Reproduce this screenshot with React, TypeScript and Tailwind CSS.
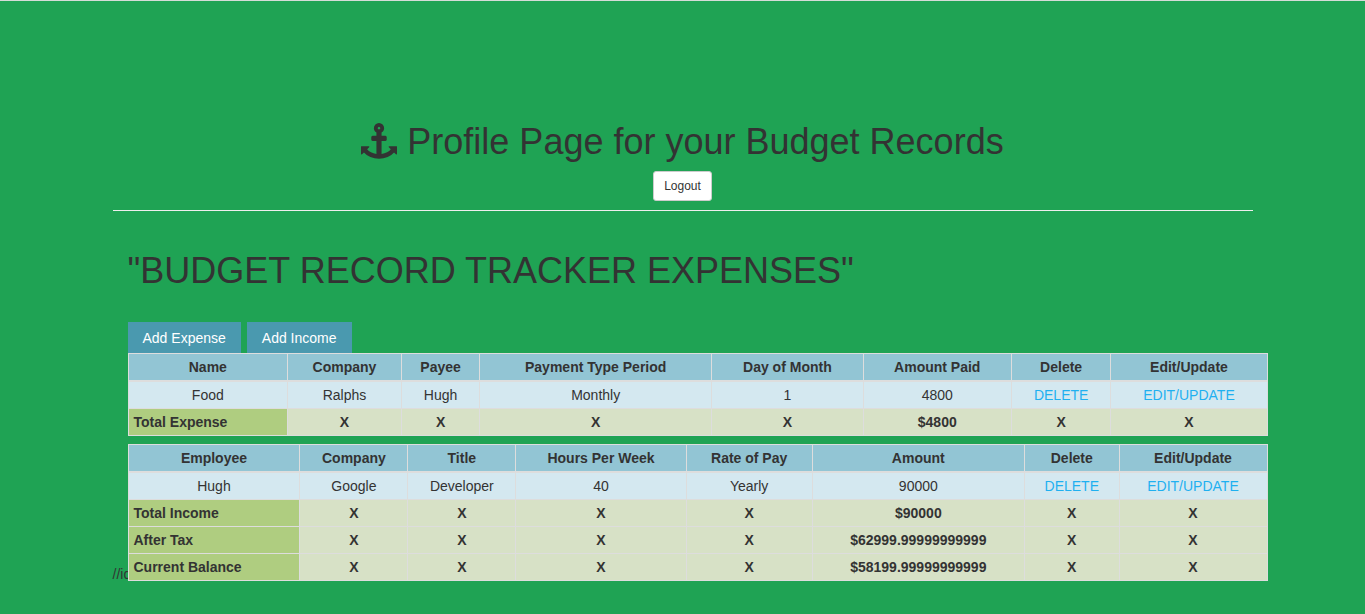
type Row = string[];

const expenseHeads: Row = ['Name', 'Company', 'Payee', 'Payment Type Period', 'Day of Month', 'Amount Paid', 'Delete', 'Edit/Update'];
const expenseRows: Row[] = [['Food', 'Ralphs', 'Hugh', 'Monthly', '1', '4800']];
const expenseTotals: Row[] = [['Total Expense', 'X', 'X', 'X', 'X', '$4800', 'X', 'X']];

const incomeHeads: Row = ['Employee', 'Company', 'Title', 'Hours Per Week', 'Rate of Pay', 'Amount', 'Delete', 'Edit/Update'];
const incomeRows: Row[] = [['Hugh', 'Google', 'Developer', '40', 'Yearly', '90000']];
const incomeTotals: Row[] = [
  ['Total Income', 'X', 'X', 'X', 'X', '$90000', 'X', 'X'],
  ['After Tax', 'X', 'X', 'X', 'X', '$62999.99999999999', 'X', 'X'],
  ['Current Balance', 'X', 'X', 'X', 'X', '$58199.99999999999', 'X', 'X'],
];

function AnchorIcon() {
  return (
    <svg viewBox="0 0 1792 1792" className="mr-[10px] inline-block size-9 align-[-5px]" fill="currentColor" aria-hidden="true">
      <path d="M960 256q0-26-19-45t-45-19-45 19-19 45 19 45 45 19 45-19 19-45zm832 928v352q0 22-20 30-8 2-12 2-13 0-23-9l-93-93q-119 143-318.5 226.5t-429.5 83.5-429.5-83.5-318.5-226.5l-93 93q-9 9-23 9-4 0-12-2-20-8-20-30v-352q0-14 9-23t23-9h352q22 0 30 20 8 19-7 35l-100 100q67 91 189.5 153.5t271.5 82.5v-647h-192q-26 0-45-19t-19-45v-128q0-26 19-45t45-19h192v-163q-58-34-93-92.5t-35-128.5q0-106 75-181t181-75 181 75 75 181q0 70-35 128.5t-93 92.5v163h192q26 0 45 19t19 45v128q0 26-19 45t-45 19h-192v647q149-20 271.5-82.5t189.5-153.5l-100-100q-15-16-7-35 8-20 30-20h352q14 0 23 9t9 23z" />
    </svg>
  );
}

function RecordTable({ label, heads, rows, totals }: { label: string; heads: Row; rows: Row[]; totals: Row[] }) {
  const cell = 'border border-[#dddddd] px-[5px] py-[3px]';
  return (
    <table aria-label={label} className="w-full border-collapse border border-[#dddddd] text-center">
      <thead className="bg-[#92c5d4]">
        <tr>
          {heads.map((h) => (
            <th key={h} scope="col" className="border border-b-2 border-[#dddddd] px-[5px] py-[3px] font-bold">{h}</th>
          ))}
        </tr>
      </thead>
      <tbody>
        {rows.map((r) => (
          <tr key={r[0]} className="bg-[#d4e8f0]">
            {r.map((c, i) => <td key={i} className={cell}>{c}</td>)}
            <td className={cell}><a href="#delete" className="text-[#1fb0f0]">DELETE</a></td>
            <td className={cell}><a href="#edit" className="text-[#1fb0f0]">EDIT/UPDATE</a></td>
          </tr>
        ))}
        {totals.map((r) => (
          <tr key={r[0]} className="bg-[#d7e1c6] font-bold">
            {r.map((c, i) =>
              i === 0 ? (
                <th key={i} scope="row" className="border border-[#dddddd] bg-[#afcd80] px-[5px] py-[3px] text-left">{c}</th>
              ) : (
                <td key={i} className={cell}>{c}</td>
              ),
            )}
          </tr>
        ))}
      </tbody>
    </table>
  );
}

export default function App() {
  return (
    <div className="min-h-screen border-t border-[#d5dcd8] bg-[#1fa354] font-['Liberation_Sans',Arial,sans-serif] text-[14px] leading-[20px] text-[#333333]">
      <div className="mx-auto max-w-[1170px] px-[15px] pt-[121px] pb-8">
        <header className="border-b border-[#eeeeee] pb-[9px] text-center">
          <h1 className="mb-[9px] text-[36px] leading-[40px]"><AnchorIcon />Profile Page for your Budget Records</h1>
          <button type="button" className="mx-auto block h-[30px] rounded-[3px] border border-[#cccccc] bg-white px-[10px] text-[12px] leading-[18px]">Logout</button>
        </header>
        <main className="relative -mr-[15px] ml-[15px] pt-10">
          <h2 className="text-[36px] leading-[40px]">"BUDGET RECORD TRACKER EXPENSES"</h2>
          <div className="mt-[31px] flex gap-[6px]">
            <button type="button" className="h-[31px] bg-[#4a99af] px-[15px] text-white">Add Expense</button>
            <button type="button" className="h-[31px] bg-[#4a99af] px-[15px] text-white">Add Income</button>
          </div>
          <p className="absolute bottom-[-3px] -left-[15px]">//id</p>
          <div className="relative flex flex-col gap-2">
            <RecordTable label="Expenses" heads={expenseHeads} rows={expenseRows} totals={expenseTotals} />
            <RecordTable label="Income" heads={incomeHeads} rows={incomeRows} totals={incomeTotals} />
          </div>
        </main>
      </div>
    </div>
  );
}
